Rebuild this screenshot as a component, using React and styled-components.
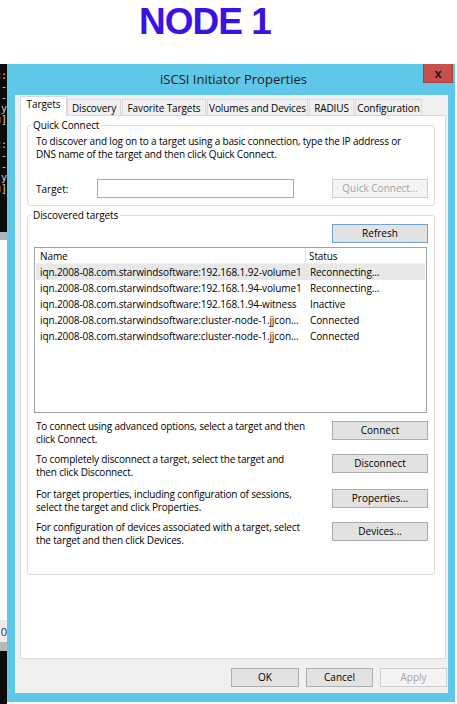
import React from "react"
import styled, { createGlobalStyle } from "styled-components"

const UI_FONT = `"Open Sans", "Noto Sans", sans-serif`

const GlobalStyle = createGlobalStyle`
  * { box-sizing: border-box; }
  body {
    margin: 0;
    background: #fff;
    font-family: ${UI_FONT};
  }
`

const Heading = styled.h1`
  margin: 0;
  height: 64px;
  padding: 1px 0 0 139px;
  font-family: "Liberation Sans", Arial, sans-serif;
  font-size: 37px;
  font-weight: 700;
  line-height: 42px;
  letter-spacing: -1px;
  color: #3a12e4;
`

const Scene = styled.div`
  display: flex;
  height: 640px;
`

const Backdrop = styled.div`
  width: 7px;
  display: flex;
  flex-direction: column;
  overflow: hidden;
`

const Console = styled.div`
  height: 168px;
  background: #0b0b0b;
  padding-top: 6px;
`

const ConsoleLine = styled.div`
  display: flex;
  justify-content: flex-end;
  height: ${(p) => p.h || 11}px;
  font-family: "DejaVu Sans Mono", monospace;
  font-size: 10px;
  line-height: 11px;
  color: #cfcfcf;
  white-space: pre;
`

const Band = styled.div`
  height: ${(p) => p.h}px;
  background: ${(p) => p.bg};
  flex: ${(p) => (p.grow ? 1 : "none")};
  display: flex;
  justify-content: flex-end;
  align-items: center;
  font-size: 11px;
  color: #333;
`

const Window = styled.div`
  width: 448px;
  height: 638px;
  background: #5fc7e7;
  display: flex;
  flex-direction: column;
  padding: 0 7px 9px 8px;
`

const TitleBar = styled.div`
  height: 31px;
  display: grid;
  grid-template-columns: 1fr auto 1fr;
`

const TitleText = styled.div`
  grid-column: 2;
  align-self: center;
  padding: 0 0 2px 4px;
  font-size: 13px;
  color: #1d1d1d;
`

const CloseButton = styled.div`
  grid-column: 3;
  justify-self: end;
  width: 30px;
  height: 19px;
  margin-right: -5px;
  background: #c8504b;
  border: 1px solid #a7403c;
  border-top: none;
  display: flex;
  align-items: center;
  justify-content: center;
  font-family: "Liberation Sans", Arial, sans-serif;
  font-weight: 700;
  font-size: 13px;
  color: #1a1a1a;
`

const Client = styled.div`
  flex: 1;
  background: #f0f0f0;
  display: flex;
  flex-direction: column;
  padding: 2px 0 5px 5px;
`

const TabStrip = styled.div`
  display: flex;
  align-items: flex-end;
  gap: 1px;
  height: 19px;
  padding-left: 1px;
  margin-bottom: -1px;
  position: relative;
  z-index: 1;
`

const Tab = styled.div`
  width: ${(p) => p.w}px;
  height: ${(p) => (p.active ? 20 : 17)}px;
  border: 1px solid #d9d9d9;
  border-bottom: ${(p) => (p.active ? "none" : "1px solid #d9d9d9")};
  background: ${(p) => (p.active ? "#fff" : "#f0f0f0")};
  font-size: 10px;
  line-height: ${(p) => (p.active ? 15 : 16)}px;
  letter-spacing: -0.1px;
  text-align: center;
  color: #000;
  margin-left: ${(p) => (p.active ? -1 : 0)}px;
  margin-right: ${(p) => (p.active ? -1 : 0)}px;
`

const Panel = styled.div`
  height: 544px;
  margin-right: 2px;
  background: #fff;
  border: 1px solid #d9d9d9;
  padding: 3px 10px 0 6px;
`

const Group = styled.fieldset`
  margin: ${(p) => p.mt || 0}px 0 0 0;
  padding: 0 6px ${(p) => p.pb || 0}px 6px;
  border: 1px solid #dcdcdc;
  border-radius: 3px;
  min-width: 0;
`

const Legend = styled.legend`
  margin-left: -3px;
  padding: 0 2px;
  font-size: 10px;
  line-height: 13px;
  letter-spacing: -0.1px;
  color: #000;
`

const Hint = styled.div`
  margin: 3px 0 0 2px;
  font-size: 10px;
  line-height: 13px;
  letter-spacing: -0.17px;
  color: #000;
`

const TargetRow = styled.div`
  display: flex;
  align-items: center;
  margin-top: 18px;
  padding-left: 2px;
`

const FieldLabel = styled.div`
  width: 61px;
  font-size: 10px;
  color: #000;
`

const TextBox = styled.div`
  width: 197px;
  height: 19px;
  border: 1px solid #a9abb1;
  background: #fff;
`

const Button = styled.div`
  width: ${(p) => p.w || 96}px;
  height: 19px;
  flex: none;
  margin-left: ${(p) => (p.push ? "auto" : 0)};
  margin-top: ${(p) => p.mt || 0}px;
  border: 1px solid ${(p) => (p.disabled ? "#cfcfcf" : p.focused ? "#6ea2cf" : "#adadad")};
  background: ${(p) => (p.disabled ? "#f4f4f4" : "#e2e2e2")};
  color: ${(p) => (p.disabled ? "#a3a3a3" : "#000")};
  font-size: 10px;
  line-height: 17px;
  text-align: center;
`

const RefreshRow = styled.div`
  display: flex;
  justify-content: flex-end;
  margin-top: 2px;
`

const List = styled.div`
  height: 166px;
  margin: 4px 1px 0 0;
  border: 1px solid #9ea1a6;
  background: #fff;
  font-size: 10px;
  letter-spacing: -0.1px;
  color: #000;
`

const ListHeader = styled.div`
  display: grid;
  grid-template-columns: 270px 1fr;
  height: 16px;
  border-bottom: 1px solid #f0f0f0;
`

const HeaderCell = styled.div`
  line-height: 16px;
  padding-left: ${(p) => (p.first ? 5 : 3)}px;
  border-left: ${(p) => (p.first ? "none" : "1px solid #e5e5e5")};
`

const ListRow = styled.div`
  display: grid;
  grid-template-columns: 270px 1fr;
  height: 16px;
  margin: 0 1px;
  background: ${(p) => (p.selected ? "#e8e8e8" : "transparent")};
`

const Cell = styled.div`
  line-height: 16px;
  padding-left: 4px;
  white-space: nowrap;
  overflow: hidden;
`

const Actions = styled.div`
  display: flex;
  flex-direction: column;
  gap: 8px;
  margin-top: 7px;
`

const ActionRow = styled.div`
  display: flex;
  align-items: flex-start;
  padding-left: 2px;
  margin-top: ${(p) => p.mt || 0}px;
`

const ActionText = styled.div`
  width: 285px;
  font-size: 10px;
  line-height: 12.5px;
  letter-spacing: -0.17px;
  color: #000;
`

const Footer = styled.div`
  display: flex;
  justify-content: flex-end;
  gap: 7px;
  margin-top: 9px;
  padding-right: 1px;
`

const tabs = [
  { label: "Targets", w: 47, active: true },
  { label: "Discovery", w: 54 },
  { label: "Favorite Targets", w: 84 },
  { label: "Volumes and Devices", w: 101 },
  { label: "RADIUS", w: 45 },
  { label: "Configuration", w: 67 },
]

const targets = [
  ["iqn.2008-08.com.starwindsoftware:192.168.1.92-volume1", "Reconnecting..."],
  ["iqn.2008-08.com.starwindsoftware:192.168.1.94-volume1", "Reconnecting..."],
  ["iqn.2008-08.com.starwindsoftware:192.168.1.94-witness", "Inactive"],
  ["iqn.2008-08.com.starwindsoftware:cluster-node-1.jjcon...", "Connected"],
  ["iqn.2008-08.com.starwindsoftware:cluster-node-1.jjcon...", "Connected"],
]

const actions = [
  [["To connect using advanced options, select a target and then", "click Connect."], "Connect", 0],
  [["To completely disconnect a target, select the target and", "then click Disconnect."], "Disconnect", 0],
  [["For target properties, including configuration of sessions,", "select the target and click Properties."], "Properties...", 2],
  [["For configuration of devices associated with a target, select", "the target and then click Devices."], "Devices...", 0],
]

const consoleLines = ["c:", "-", "-", "y", "u]", "", "c:", "-", "-", "y", "u]"]

const App = () => {
  return (
    <>
      <GlobalStyle />
      <Heading>NODE 1</Heading>
      <Scene>
        <Backdrop>
          <Console>
            {consoleLines.map((l, i) => (
              <ConsoleLine key={i} h={i === 4 ? 14 : 11}>{l}</ConsoleLine>
            ))}
          </Console>
          <Band h={8} bg="#aab4bc" />
          <Band h={380} bg="#ffffff" />
          <Band h={22} bg="#ececec">0</Band>
          <Band h={9} bg="#b9b9b9" />
          <Band grow bg="#0b0b0b" />
        </Backdrop>
        <Window>
          <TitleBar>
            <TitleText>iSCSI Initiator Properties</TitleText>
            <CloseButton>x</CloseButton>
          </TitleBar>
          <Client>
            <TabStrip>
              {tabs.map((t) => (
                <Tab key={t.label} w={t.w} active={t.active}>{t.label}</Tab>
              ))}
            </TabStrip>
            <Panel>
              <Group pb={7}>
                <Legend>Quick Connect</Legend>
                <Hint>
                  To discover and log on to a target using a basic connection, type the IP address or
                  <br />
                  DNS name of the target and then click Quick Connect.
                </Hint>
                <TargetRow>
                  <FieldLabel>Target:</FieldLabel>
                  <TextBox />
                  <Button push disabled>Quick Connect...</Button>
                </TargetRow>
              </Group>
              <Group mt={3} pb={28}>
                <Legend>Discovered targets</Legend>
                <RefreshRow>
                  <Button focused>Refresh</Button>
                </RefreshRow>
                <List>
                  <ListHeader>
                    <HeaderCell first>Name</HeaderCell>
                    <HeaderCell>Status</HeaderCell>
                  </ListHeader>
                  {targets.map(([name, status], i) => (
                    <ListRow key={i} selected={i === 0}>
                      <Cell>{name}</Cell>
                      <Cell>{status}</Cell>
                    </ListRow>
                  ))}
                </List>
                <Actions>
                  {actions.map(([lines, label, extra]) => (
                    <ActionRow key={label} mt={extra}>
                      <ActionText>
                        {lines[0]}
                        <br />
                        {lines[1]}
                      </ActionText>
                      <Button push mt={1}>{label}</Button>
                    </ActionRow>
                  ))}
                </Actions>
              </Group>
            </Panel>
            <Footer>
              <Button w={68}>OK</Button>
              <Button w={67}>Cancel</Button>
              <Button w={67} disabled>Apply</Button>
            </Footer>
          </Client>
        </Window>
      </Scene>
    </>
  )
}

export default App
